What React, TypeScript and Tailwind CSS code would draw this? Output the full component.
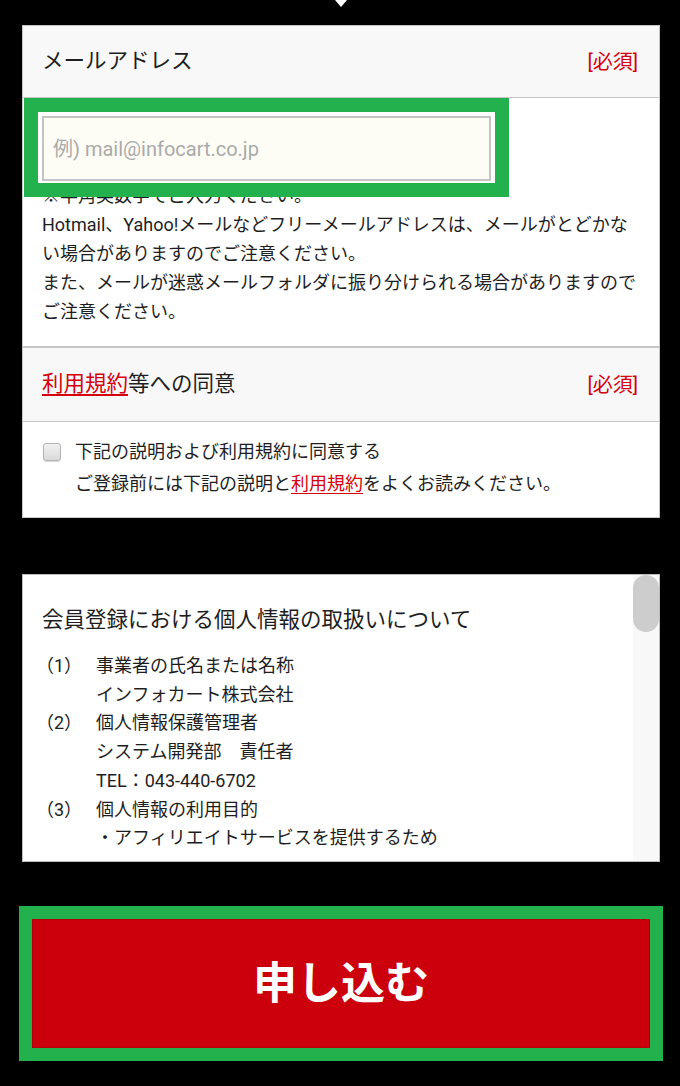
import React, { useState } from 'react';

const FONT = "font-['Roboto','Noto_Sans_CJK_JP',sans-serif]";

const privacyItems = [
    { no: '（1）', lines: ['事業者の氏名または名称', 'インフォカート株式会社'] },
    { no: '（2）', lines: ['個人情報保護管理者', 'システム開発部　責任者', 'TEL：043-440-6702'] },
    { no: '（3）', lines: ['個人情報の利用目的', '・アフィリエイトサービスを提供するため'] },
];

const Required: React.FC = () => (
    <span className="text-[20px] text-[#d6000d]">[必須]</span>
);

const App: React.FC = () => {
    const [email, setEmail] = useState('');
    const [agreed, setAgreed] = useState(false);

    return (
        <div className={`min-h-[1086px] bg-black text-[#1e1e1e] ${FONT}`}>
            {/* 前ステップからの矢印 */}
            <div className="ml-[335px] h-0 w-0 border-l-[6px] border-r-[6px] border-t-[7px] border-l-transparent border-r-transparent border-t-white" />

            {/* 入力フォーム */}
            <div className="ml-[22px] mt-[18px] w-[638px] border border-[#c6c6c6] bg-white">
                <div className="flex h-[72px] items-center justify-between border-b border-[#c6c6c6] bg-[#f8f8f8] pl-[19px] pr-[21px]">
                    <span className="text-[21.5px]">メールアドレス</span>
                    <Required />
                </div>

                <div className="relative border-b-2 border-[#c6c6c6] pb-[20px] pl-[19px] pr-[21px] pt-[18px]">
                    <input
                        type="email"
                        value={email}
                        onChange={e => setEmail(e.target.value)}
                        placeholder="例) mail@infocart.co.jp"
                        className="block h-[65px] w-[449px] border-2 border-[#c4c4c4] bg-[#fdfdf5] pl-[9px] text-[20px] text-[#222] outline-none placeholder:text-[#aaa]"
                    />
                    <p className="text-[18px] leading-[29px]">
                        ※半角英数字でご入力ください。<br />
                        Hotmail、Yahoo!メールなどフリーメールアドレスは、メールがとどかない場合がありますのでご注意ください。<br />
                        また、メールが迷惑メールフォルダに振り分けられる場合がありますのでご注意ください。
                    </p>
                    {/* 強調枠 */}
                    <div className="pointer-events-none absolute left-[1px] top-0 h-[99px] w-[485px] border-[14px] border-[#22b14c]" />
                </div>

                <div className="flex h-[74px] items-center justify-between border-b border-[#c6c6c6] bg-[#f8f8f8] pl-[19px] pr-[21px]">
                    <span className="text-[21.5px]">
                        <a href="#" className="text-[#d6000d] underline underline-offset-[3px]">利用規約</a>等への同意
                    </span>
                    <Required />
                </div>

                <label className="flex gap-[14px] pb-[17px] pl-[20px] pr-[21px] pt-[14px]">
                    <input
                        type="checkbox"
                        checked={agreed}
                        onChange={e => setAgreed(e.target.checked)}
                        className="sr-only"
                    />
                    <span className="mt-[7px] h-[18px] w-[18px] shrink-0 rounded-[3px] border border-[#b3b3b3] bg-gradient-to-b from-[#f2f2f2] to-[#d9d9d9] shadow-[0_1px_1px_rgba(0,0,0,0.15)]" />
                    <span className="text-[18px] leading-[32px]">
                        下記の説明および利用規約に同意する<br />
                        ご登録前には下記の説明と<a href="#" className="text-[#d6000d] underline underline-offset-[3px]">利用規約</a>をよくお読みください。
                    </span>
                </label>
            </div>

            {/* 個人情報の取扱い */}
            <div className="ml-[22px] mt-[56px] flex h-[288px] w-[638px] border border-[#bdbdbd] bg-white">
                <div className="flex-1 overflow-hidden pl-[19px] pt-[30px]">
                    <h2 className="text-[21.5px] leading-[30px]">会員登録における個人情報の取扱いについて</h2>
                    <div className="mt-[17px] text-[18px] leading-[28.7px]">
                        {privacyItems.map(item => (
                            <div key={item.no}>
                                <div className="flex">
                                    <span className="-ml-[6px] w-[60px] shrink-0">{item.no}</span>
                                    <span>{item.lines[0]}</span>
                                </div>
                                {item.lines.slice(1).map(line => (
                                    <div key={line} className="pl-[54px]">{line}</div>
                                ))}
                            </div>
                        ))}
                    </div>
                </div>
                <div className="w-[26px] shrink-0 bg-[#f8f8f8]">
                    <div className="h-[57px] rounded-full bg-[#cdcdcd]" />
                </div>
            </div>

            {/* 申し込みボタン */}
            <div className="ml-[19px] mt-[44px] w-[644px] border-[13px] border-[#22b14c]">
                <button className="flex h-[129px] w-full items-center justify-center border border-[#b0000a] bg-[#cc000c] text-[44px] font-bold text-white">
                    申し込む
                </button>
            </div>
        </div>
    );
};

export default App;
